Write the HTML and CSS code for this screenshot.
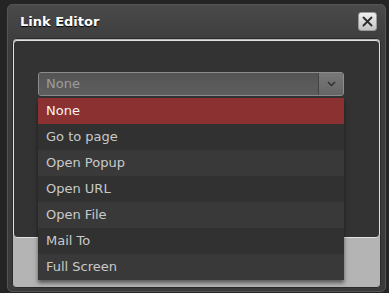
FILE: index.html
```html
<!DOCTYPE html>
<html>
<head>
    <title>Link Editor</title>
    <link rel="stylesheet" href="styles.css">
</head>
<body>
    <div class="dialog">
        <div class="titlebar">
            <span class="title">Link Editor</span>
            <button class="close-btn" aria-label="Close">
                <svg width="11" height="11" viewBox="0 0 11 11">
                    <path d="M1.5 1.5 L9.5 9.5 M9.5 1.5 L1.5 9.5" stroke="#2b2b2b" stroke-width="1.8" stroke-linecap="round"/>
                </svg>
            </button>
        </div>
        <div class="dialog-body">
            <div class="panel">
                <div class="select-wrap">
                    <div class="select">
                        <span class="select-value">None</span>
                        <span class="select-btn">
                            <svg width="9" height="6" viewBox="0 0 9 6">
                                <path d="M1 1 L4.5 4.5 L8 1" fill="none" stroke="#2e2e2e" stroke-width="1.5"/>
                            </svg>
                        </span>
                    </div>
                    <ul class="options">
                        <li class="selected">None</li>
                        <li>Go to page</li>
                        <li>Open Popup</li>
                        <li>Open URL</li>
                        <li>Open File</li>
                        <li>Mail To</li>
                        <li>Full Screen</li>
                    </ul>
                </div>
            </div>
        </div>
    </div>
</body>
</html>
```
FILE: styles.css
```css
body {
    margin: 0;
    background-color: #242424;
    font-family: "DejaVu Sans", Verdana, sans-serif;
    font-size: 13px;
    height: 293px;
    overflow: hidden;
}

.dialog {
    margin: 4px 0 0 7px;
    width: 379px;
    height: 288px;
    box-sizing: border-box;
    border: 1px solid #555;
    border-radius: 5px;
    background: linear-gradient(#4a4a4a, #3c3c3c 40px, #3a3a3a);
    padding: 0 4px 3px 4px;
}

.titlebar {
    height: 33px;
    display: flex;
    align-items: center;
    justify-content: space-between;
    padding: 0 4px 0 8px;
}

.title {
    color: #fff;
    font-weight: bold;
    font-size: 13px;
    text-shadow: 0 1px 1px #000;
}

.close-btn {
    width: 19px;
    height: 19px;
    padding: 0;
    border: 1px solid #9a9a9a;
    border-radius: 3px;
    background: linear-gradient(#f0f0f0, #c2c2c2);
    display: flex;
    align-items: center;
    justify-content: center;
}

.dialog-body {
    height: 250px;
    box-sizing: border-box;
    background-color: #b4b4b4;
    border: 1px solid #2a2a2a;
    border-radius: 4px;
    padding: 1px 0 0 0;
}

.panel {
    height: 198px;
    box-sizing: border-box;
    background-color: #333;
    border: 1px solid #e2e2e2;
    border-radius: 4px;
    padding: 31px 0 0 24px;
}

.select-wrap {
    position: relative;
    width: 306px;
}

.select {
    height: 24px;
    box-sizing: border-box;
    display: flex;
    border: 1px solid #8c8c8c;
    border-radius: 3px;
    background-color: #5b5b5b;
    overflow: hidden;
}

.select-value {
    flex: 1;
    color: #9d9d9d;
    line-height: 22px;
    padding-left: 7px;
    background: linear-gradient(#545454, #5e5e5e);
    border-right: 1px solid #444;
}

.select-btn {
    width: 24px;
    display: flex;
    align-items: center;
    justify-content: center;
    background: linear-gradient(#787878, #666);
}

.options {
    position: absolute;
    top: 26px;
    left: 0;
    width: 306px;
    margin: 0;
    padding: 0;
    list-style: none;
    box-shadow: 0 3px 4px rgba(0, 0, 0, 0.5);
}

.options li {
    height: 26px;
    line-height: 26px;
    padding-left: 8px;
    color: #c9c9c9;
    background-color: #313131;
}

.options li:nth-child(odd) {
    background-color: #393939;
}

.options li.selected {
    background-color: #8b3131;
    color: #f4f4f4;
}
```
